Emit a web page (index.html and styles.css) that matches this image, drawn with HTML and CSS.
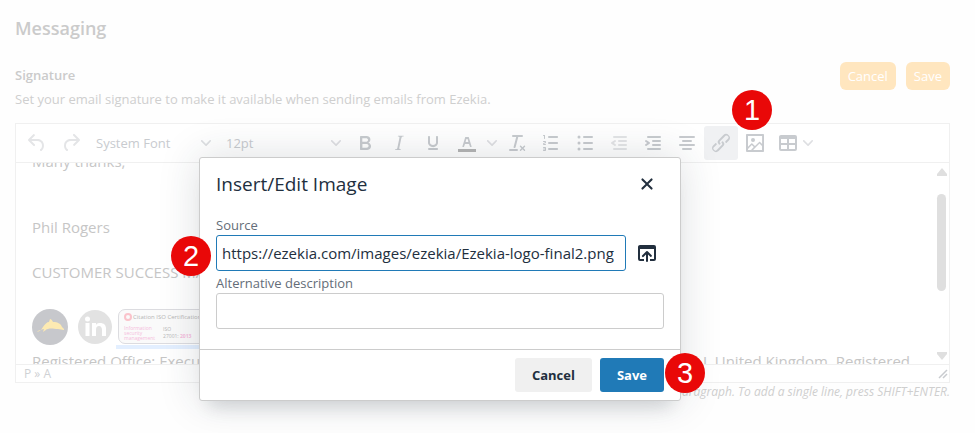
FILE: index.html
```html
<!DOCTYPE html>
<html lang="en">
<head>
    <meta charset="UTF-8">
    <meta name="viewport" content="width=device-width, initial-scale=1.0">
    <title>Messaging</title>
    <link rel="stylesheet" href="styles.css">
</head>
<body>
    <main class="page">
        <h1>Messaging</h1>
        <div class="section-head">
            <div>
                <h2>Signature</h2>
                <p>Set your email signature to make it available when sending emails from Ezekia.</p>
            </div>
            <div class="section-actions">
                <button type="button">Cancel</button>
                <button type="button">Save</button>
            </div>
        </div>

        <div class="editor">
            <div class="toolbar">
                <button type="button" aria-label="Undo" class="tool disabled"><svg viewBox="0 0 24 24"><path d="M6.4 8H12c3.7 0 6.2 2 6.8 5.1.6 2.7-.4 5.6-2.3 6.8a1 1 0 0 1-1-1.8c1.1-.6 1.8-2.7 1.4-4.6-.5-2.1-2.1-3.5-4.9-3.5H6.4l3.3 3.3a1 1 0 1 1-1.4 1.4l-5-5a1 1 0 0 1 0-1.4l5-5a1 1 0 0 1 1.4 1.4L6.4 8z"/></svg></button>
                <button type="button" aria-label="Redo" class="tool disabled"><svg viewBox="0 0 24 24"><path d="M17.6 10H12c-2.8 0-4.4 1.4-4.9 3.5-.4 2 .3 4 1.4 4.6a1 1 0 1 1-1 1.8c-2-1.2-2.9-4.1-2.3-6.8.6-3 3-5.1 6.8-5.1h5.6l-3.3-3.3a1 1 0 1 1 1.4-1.4l5 5a1 1 0 0 1 0 1.4l-5 5a1 1 0 0 1-1.4-1.4l3.3-3.3z"/></svg></button>
                <button type="button" class="tool-select">System Font <svg class="chevron" viewBox="0 0 10 10"><path d="M8.7 2.2c.3-.3.8-.3 1 0 .4.4.4.9 0 1.2L5.7 7.8c-.3.3-.9.3-1.2 0L.2 3.4a.8.8 0 0 1 0-1.2c.3-.3.8-.3 1.1 0L5 6l3.7-3.8z"/></svg></button>
                <button type="button" class="tool-select">12pt <svg class="chevron" viewBox="0 0 10 10"><path d="M8.7 2.2c.3-.3.8-.3 1 0 .4.4.4.9 0 1.2L5.7 7.8c-.3.3-.9.3-1.2 0L.2 3.4a.8.8 0 0 1 0-1.2c.3-.3.8-.3 1.1 0L5 6l3.7-3.8z"/></svg></button>
                <button type="button" aria-label="Bold" class="tool"><svg viewBox="0 0 24 24"><path fill-rule="evenodd" d="M7.8 19c-.3 0-.5 0-.6-.2l-.2-.5V5.7c0-.2 0-.4.2-.5l.6-.2h5c1.5 0 2.7.3 3.5 1 .7.6 1.1 1.4 1.1 2.5a3 3 0 0 1-.6 1.9c-.4.6-1 1-1.6 1.2.4.1.9.3 1.3.6s.8.7 1 1.2c.4.4.5 1 .5 1.6 0 1.3-.4 2.3-1.3 3-.8.7-2.1 1-3.8 1H7.8zm5-8.3c.6 0 1.2-.1 1.6-.5.4-.3.6-.7.6-1.3 0-1.1-.8-1.7-2.3-1.7H9.3v3.5h3.4zm.5 6c.7 0 1.3-.1 1.7-.4.4-.4.6-.9.6-1.5s-.2-1-.7-1.4c-.4-.3-1-.4-2-.4H9.4v3.8h4z"/></svg></button>
                <button type="button" aria-label="Italic" class="tool"><svg viewBox="0 0 24 24"><path d="M16.7 4.7l-.1.9h-.3c-.6 0-1 0-1.4.3-.3.3-.4.6-.5 1.1l-2.1 9.8v.6c0 .5.4.8 1.4.8h.2l-.2.8H8l.2-.8h.2c1.1 0 1.8-.5 2-1.5l2-9.8.1-.5c0-.6-.4-.8-1.4-.8h-.3l.2-.9h5.8z"/></svg></button>
                <button type="button" aria-label="Underline" class="tool"><svg viewBox="0 0 24 24"><path d="M16 5c.6 0 1 .4 1 1v5.5a4 4 0 0 1-.4 1.8l-1 1.4a5.3 5.3 0 0 1-5.5 1 5 5 0 0 1-1.6-1c-.5-.4-.8-.9-1.1-1.4a4 4 0 0 1-.4-1.8V6c0-.6.4-1 1-1s1 .4 1 1v5.5c0 .3 0 .6.2 1l.6.7a3.3 3.3 0 0 0 2.2.8 3.4 3.4 0 0 0 2.2-.8c.3-.2.4-.5.6-.8l.2-.9V6c0-.6.4-1 1-1zM8 17h8c.6 0 1 .4 1 1s-.4 1-1 1H8a1 1 0 0 1 0-2z"/></svg></button>
                <button type="button" aria-label="Text color" class="tool split"><svg viewBox="0 0 24 24"><path fill="#b5b5b5" d="M3 18h18v3H3z"/><path fill-rule="evenodd" d="M8.7 16h-.8a.5.5 0 0 1-.5-.6l2.7-9c.1-.3.3-.4.5-.4h2.8c.2 0 .4.1.5.4l2.7 9a.5.5 0 0 1-.5.6h-.8a.5.5 0 0 1-.4-.4l-.7-2.2c0-.3-.3-.4-.5-.4h-3.4c-.2 0-.4.1-.5.4l-.7 2.2c0 .3-.2.4-.4.4zm2.6-7.6l-.6 2a.5.5 0 0 0 .5.6h1.6a.5.5 0 0 0 .5-.6l-.6-2c0-.3-.3-.4-.5-.4h-.4c-.2 0-.4.1-.5.4z"/></svg><svg class="chevron" viewBox="0 0 10 10"><path d="M8.7 2.2c.3-.3.8-.3 1 0 .4.4.4.9 0 1.2L5.7 7.8c-.3.3-.9.3-1.2 0L.2 3.4a.8.8 0 0 1 0-1.2c.3-.3.8-.3 1.1 0L5 6l3.7-3.8z"/></svg></button>
                <button type="button" aria-label="Clear formatting" class="tool"><svg viewBox="0 0 24 24"><path d="M13.2 6a1 1 0 0 1 0 .2l-2.6 10a1 1 0 0 1-1 .8h-.2a.8.8 0 0 1-.8-1l2.6-10H8a1 1 0 1 1 0-2h9a1 1 0 0 1 0 2h-3.8zM5 18h7a1 1 0 0 1 0 2H5a1 1 0 0 1 0-2zm14 1.8L17.5 18.3 16 19.8a.7.7 0 0 1-1-1l1.5-1.5-1.5-1.5a.7.7 0 0 1 1-1l1.5 1.5 1.5-1.5a.7.7 0 0 1 1 1L18.5 17.3l1.5 1.5a.7.7 0 0 1-1 1z"/></svg></button>
                <button type="button" aria-label="Numbered list" class="tool"><svg viewBox="0 0 24 24"><path d="M10 17h8c.6 0 1 .4 1 1s-.4 1-1 1h-8a1 1 0 0 1 0-2zm0-6h8c.6 0 1 .4 1 1s-.4 1-1 1h-8a1 1 0 0 1 0-2zm0-6h8c.6 0 1 .4 1 1s-.4 1-1 1h-8a1 1 0 1 1 0-2zM6 4v3.5c0 .3-.2.5-.5.5a.5.5 0 0 1-.5-.5V5h-.5a.5.5 0 0 1 0-1H6zm-1 8.8l.2.2h1.3c.3 0 .5.2.5.5s-.2.5-.5.5H4.9a1 1 0 0 1-.9-1V13c0-.4.3-.8.6-1l1.2-.4.2-.3a.2.2 0 0 0-.2-.2H4.5a.5.5 0 0 1-.5-.5c0-.3.2-.5.5-.5h1.6c.5 0 .9.4.9 1v.1c0 .4-.3.8-.6 1l-1.2.4-.2.3zM7 17v2c0 .6-.4 1-1 1H4.5a.5.5 0 0 1 0-1h1.2c.2 0 .3-.1.3-.3 0-.2-.1-.3-.3-.3H4.4a.4.4 0 1 1 0-.8h1.3c.2 0 .3-.1.3-.3 0-.2-.1-.3-.3-.3H4.5a.5.5 0 1 1 0-1H6c.6 0 1 .4 1 1z"/></svg></button>
                <button type="button" aria-label="Bullet list" class="tool"><svg viewBox="0 0 24 24"><path d="M11 5h8a1 1 0 0 1 0 2h-8a1 1 0 0 1 0-2zm0 6h8a1 1 0 0 1 0 2h-8a1 1 0 0 1 0-2zm0 6h8a1 1 0 0 1 0 2h-8a1 1 0 0 1 0-2z"/><circle cx="6" cy="6" r="1.5"/><circle cx="6" cy="12" r="1.5"/><circle cx="6" cy="18" r="1.5"/></svg></button>
                <button type="button" aria-label="Decrease indent" class="tool disabled"><svg viewBox="0 0 24 24"><path d="M7 5h12a1 1 0 0 1 0 2H7a1 1 0 0 1 0-2zm5 4h7a1 1 0 0 1 0 2h-7a1 1 0 0 1 0-2zm0 4h7a1 1 0 0 1 0 2h-7a1 1 0 0 1 0-2zm-5 4h12a1 1 0 0 1 0 2H7a1 1 0 0 1 0-2zm1.6-3.8a1 1 0 0 1-1.2 1.6l-3-2a1 1 0 0 1 0-1.6l3-2a1 1 0 0 1 1.2 1.6L6.8 12l1.8 1.2z"/></svg></button>
                <button type="button" aria-label="Increase indent" class="tool"><svg viewBox="0 0 24 24"><path d="M7 5h12a1 1 0 0 1 0 2H7a1 1 0 0 1 0-2zm5 4h7a1 1 0 0 1 0 2h-7a1 1 0 0 1 0-2zm0 4h7a1 1 0 0 1 0 2h-7a1 1 0 0 1 0-2zm-5 4h12a1 1 0 0 1 0 2H7a1 1 0 0 1 0-2zm-2.6-3.8L6.2 12l-1.8-1.2a1 1 0 0 1 1.2-1.6l3 2a1 1 0 0 1 0 1.6l-3 2a1 1 0 0 1-1.2-1.6z"/></svg></button>
                <button type="button" aria-label="Align center" class="tool"><svg viewBox="0 0 24 24"><path d="M5 5h14a1 1 0 0 1 0 2H5a1 1 0 0 1 0-2zm3 4h8a1 1 0 0 1 0 2H8a1 1 0 0 1 0-2zm-3 4h14a1 1 0 0 1 0 2H5a1 1 0 0 1 0-2zm3 4h8a1 1 0 0 1 0 2H8a1 1 0 0 1 0-2z"/></svg></button>
                <button type="button" aria-label="Link" class="tool active"><svg viewBox="0 0 24 24"><path d="M6.2 12.3a1 1 0 0 1 1.4 1.4l-2.1 2a2 2 0 1 0 2.7 2.8l4.8-4.8a1 1 0 0 0 0-1.4 1 1 0 1 1 1.4-1.3 2.9 2.9 0 0 1 0 4L9.6 20a3.9 3.9 0 0 1-5.5-5.5l2-2zm11.6-.6a1 1 0 0 1-1.4-1.4l2-2a2 2 0 1 0-2.6-2.8L11 10.3a1 1 0 0 0 0 1.4A1 1 0 1 1 9.6 13a2.9 2.9 0 0 1 0-4L14.4 4a3.9 3.9 0 0 1 5.5 5.5l-2 2z"/></svg></button>
                <button type="button" aria-label="Image" class="tool"><svg viewBox="0 0 24 24"><path fill-rule="evenodd" d="M5 15.7l3.3-3.2c.3-.3.7-.3 1 0L12 15l4.1-4c.3-.4.8-.4 1 0l2 1.9V5H5v10.7zM5 18v1h3l2.8-2.9-2-2L5 17.9zm14-3l-2.5-2.4-6.4 6.5H19v-4zM4 3h16c.6 0 1 .4 1 1v16c0 .6-.4 1-1 1H4a1 1 0 0 1-1-1V4c0-.6.4-1 1-1z"/><circle cx="10" cy="9" r="2"/></svg></button>
                <button type="button" aria-label="Table" class="tool split menu"><svg viewBox="0 0 24 24"><path fill-rule="evenodd" d="M19 4a2 2 0 0 1 2 2v12a2 2 0 0 1-2 2H5a2 2 0 0 1-2-2V6c0-1.1.9-2 2-2h14zM5 14v4h6v-4H5zm14 0h-6v4h6v-4zm0-6h-6v4h6V8zM5 12h6V8H5v4z"/></svg><svg class="chevron" viewBox="0 0 10 10"><path d="M8.7 2.2c.3-.3.8-.3 1 0 .4.4.4.9 0 1.2L5.7 7.8c-.3.3-.9.3-1.2 0L.2 3.4a.8.8 0 0 1 0-1.2c.3-.3.8-.3 1.1 0L5 6l3.7-3.8z"/></svg></button>
            </div>

            <div class="edit-area">
                <div class="content">
                    <p>Many thanks,</p>
                    <p class="spaced">Phil Rogers</p>
                    <p>CUSTOMER SUCCESS MANAGER</p>
                    <div class="logos">
                        <svg width="36" height="36" viewBox="0 0 36 36" aria-label="Ezekia">
                            <circle cx="18" cy="18" r="18" fill="#c7c8cc"/>
                            <path fill="#fdeab2" d="M5 23c3-1 4-2 6-5 2-3 4-5 6-5l1-3c1 0 2 1 3 3 5 0 8 2 9 5l2 2v1c-2 0-4-1-6-1-4 0-7-1-10 0-2 0-3 2-5 3l1-3c-2 0-4 1-6 2z"/>
                        </svg>
                        <svg width="36" height="36" viewBox="0 0 36 36" aria-label="LinkedIn">
                            <circle cx="18" cy="18" r="17" fill="#e2e2e2"/>
                            <circle cx="10.5" cy="10" r="2.5" fill="#fff"/>
                            <path fill="#fff" d="M8.500 14h4v13h-4zM15 14h4v2c1-2 3-2 4-2 4 0 6 2 6 6v7h-4v-6c0-2-1-4-3-4s-3 1-3 4v6h-4z"/>
                        </svg>
                        <div class="iso-wrap">
                            <div class="iso">
                                <div class="iso-title"><i></i>Citation ISO Certification</div>
                                <div class="iso-body">
                                    <span class="pink">Information<br>security<br>management</span>
                                    <span>ISO<br>27001: <b class="pink">2013</b></span>
                                </div>
                            </div>
                        </div>
                    </div>
                    <p class="office"><span>Registered Office: Executive</span><span>J, United Kingdom. Registered</span></p>
                </div>
                <div class="scrollbar">
                    <svg width="10" height="8" viewBox="0 0 10 8"><path d="M5 0l5 6v2H0V6z"/></svg>
                    <div class="thumb"></div>
                    <svg width="10" height="8" viewBox="0 0 10 8"><path d="M5 8L0 2V0h10v2z"/></svg>
                </div>
            </div>

            <div class="statusbar">
                <span>P » A</span>
                <svg width="10" height="10" viewBox="0 0 10 10"><path d="M1 9l8-8M5 9l4-4" stroke="#c8cbcf" stroke-width="1.5"/></svg>
            </div>
        </div>
        <p class="hint">Press ENTER to start a new paragraph. To add a single line, press SHIFT+ENTER.</p>
    </main>

    <form class="dialog" role="dialog" aria-labelledby="dialogTitle">
        <div class="dialog-header">
            <h3 id="dialogTitle">Insert/Edit Image</h3>
            <button type="button" aria-label="Close" class="icon-btn"><svg viewBox="0 0 24 24"><path d="M17.3 8.2L13.4 12l3.9 3.8a1 1 0 0 1-1.5 1.5L12 13.4l-3.8 3.9a1 1 0 0 1-1.5-1.5l3.9-3.8-3.9-3.8a1 1 0 0 1 1.5-1.5l3.8 3.9 3.8-3.9a1 1 0 0 1 1.5 1.5z"/></svg></button>
        </div>
        <div class="dialog-body">
            <label for="source">Source</label>
            <div class="source-row">
                <input type="text" id="source" class="focused" value="https://ezekia.com/images/ezekia/Ezekia-logo-final2.png">
                <button type="button" aria-label="Browse files" class="icon-btn"><svg viewBox="0 0 24 24"><path d="M19 4a2 2 0 0 1 2 2v12a2 2 0 0 1-2 2h-4v-2h4V8H5v10h4v2H5a2 2 0 0 1-2-2V6c0-1.1.9-2 2-2h14zm-8 9.4l-2.3 2.3a1 1 0 1 1-1.4-1.4l4-4a1 1 0 0 1 1.4 0l4 4a1 1 0 0 1-1.4 1.4L13 13.4V20a1 1 0 0 1-2 0v-6.6z"/></svg></button>
            </div>
            <label for="alt">Alternative description</label>
            <input type="text" id="alt">
        </div>
        <div class="dialog-footer">
            <button type="button" class="btn">Cancel</button>
            <button type="submit" class="btn primary">Save</button>
        </div>
    </form>

    <div class="step step-1">1</div>
    <div class="step step-2">2</div>
    <div class="step step-3">3</div>
</body>
</html>
```
FILE: styles.css
```css
* {
    box-sizing: border-box;
}

body {
    margin: 0;
    min-height: 100vh;
    background: #fefefe;
    font-family: "Open Sans", "Noto Sans", sans-serif;
    font-size: 13px;
    color: #cfcfcf;
    position: relative;
}

h1, h2, h3, p {
    margin: 0;
}

button, input {
    font-family: inherit;
}

button {
    border: none;
    padding: 0;
    cursor: pointer;
}

svg {
    fill: currentColor;
    flex-shrink: 0;
}

.page {
    padding: 14px 25px 0 15px;
}

h1 {
    font-size: 18px;
    line-height: 28px;
    font-weight: 600;
    color: #cbcbcb;
}

.section-head {
    display: flex;
    justify-content: space-between;
    margin-top: 20px;
    line-height: 23px;
}

h2 {
    font-size: 13px;
    line-height: 26px;
    font-weight: 600;
    color: #cbcbcb;
}

.section-actions {
    display: flex;
    align-items: flex-start;
    gap: 10px;
}

.section-actions button {
    height: 28px;
    padding: 0 8px;
    border-radius: 6px;
    background: #ffe6bf;
    color: #fff;
    font-size: 13px;
}

/* Editor */
.editor {
    margin-top: 12px;
    border: 1px solid #f0f0f0;
    background: #fff;
}

.toolbar {
    display: flex;
    align-items: center;
    height: 39px;
    padding: 0 4px;
    border-bottom: 1px solid #f0f0f0;
    color: #c8cbcf;
}

.tool {
    display: flex;
    align-items: center;
    justify-content: center;
    width: 34px;
    height: 34px;
    border-radius: 3px;
    background: none;
    color: inherit;
}

.tool svg {
    width: 24px;
    height: 24px;
}

.tool.split {
    justify-content: flex-start;
    width: 50px;
    padding-left: 5px;
    gap: 8px;
}

.tool.menu {
    padding-left: 4px;
    gap: 3px;
}

.tool.disabled {
    color: #e4e5e7;
}

.tool.active {
    background: #f0f1f3;
}

.tool .chevron,
.chevron {
    width: 10px;
    height: 10px;
    color: #dedfe2;
}

.tool-select {
    display: flex;
    align-items: center;
    justify-content: space-between;
    width: 130px;
    height: 34px;
    padding: 0 7px 0 8px;
    background: none;
    color: #c8cbcf;
    font-size: 13px;
}

.edit-area {
    display: flex;
    height: 201px;
    overflow: hidden;
}

.content {
    flex: 1;
    min-width: 0;
    margin-top: -13px;
    padding: 0 24px 0 16px;
    font-size: 15px;
    line-height: 22px;
    color: #c6c6c6;
}

.content p {
    margin-bottom: 23px;
    white-space: nowrap;
}

.content .spaced {
    margin-top: 44px;
}

.logos {
    display: flex;
    align-items: center;
    gap: 9px;
    height: 42px;
}

.content .office {
    display: flex;
    justify-content: space-between;
    margin-top: 2px;
}

.iso-wrap {
    margin: 3px 0 0 -6px;
    border-bottom: 4px solid #e3efff;
}

.iso {
    width: 120px;
    height: 35px;
    margin: 0 0 1px 2px;
    padding: 3px 5px;
    border: 1px solid #dcdce0;
    border-radius: 7px;
    background: #fafafa;
    line-height: 9px;
    white-space: nowrap;
    color: #b5b5b5;
}

.iso-title {
    display: flex;
    align-items: center;
    gap: 1px;
    font-size: 6px;
}

.iso-title i {
    width: 8px;
    height: 8px;
    border: 2px solid #fac3cb;
    border-radius: 50%;
}

.iso-body {
    display: flex;
    gap: 8px;
    margin-top: 4px;
    font-size: 5px;
    line-height: 5px;
}

.iso-body span + span {
    line-height: 7px;
}

.pink {
    color: #f5bcdc;
}

.scrollbar {
    display: flex;
    flex-direction: column;
    align-items: center;
    justify-content: space-between;
    width: 15px;
    padding: 5px 0 4px;
    color: #dfdfdf;
}

.thumb {
    width: 9px;
    height: 97px;
    margin-bottom: 43px;
    border-radius: 5px;
    background: #dfdfdf;
}

.statusbar {
    display: flex;
    justify-content: space-between;
    align-items: center;
    height: 18px;
    padding: 0 1px 0 8px;
    border-top: 1px solid #f0f0f0;
    font-size: 12px;
    color: #cfd1d4;
}

.hint {
    line-height: 18px;
    font-size: 12px;
    font-style: italic;
    text-align: right;
}

/* Dialog */
.dialog {
    position: absolute;
    top: 157px;
    left: 199px;
    width: 482px;
    border: 1px solid #ccc;
    border-radius: 3px;
    background: #fff;
    box-shadow: 0 16px 16px -10px rgba(34, 47, 62, 0.15), 0 0 40px 1px rgba(34, 47, 62, 0.15);
    color: #222f3e;
}

.dialog-header {
    display: flex;
    align-items: center;
    justify-content: space-between;
    padding: 8px 16px 0;
}

.dialog-header h3 {
    font-size: 19px;
    line-height: 36px;
    font-weight: normal;
}

.icon-btn {
    display: flex;
    align-items: center;
    justify-content: center;
    flex-shrink: 0;
    width: 34px;
    height: 34px;
    background: none;
    color: #222f3e;
}

.icon-btn svg {
    width: 24px;
    height: 24px;
}

.dialog-body {
    padding: 14px 16px 20px;
}

.dialog-body label {
    display: block;
    font-size: 13px;
    line-height: 19px;
    color: #646d78;
}

.dialog-body input {
    display: block;
    width: 100%;
    height: 36px;
    padding: 0 5px;
    border: 1px solid #ccc;
    border-radius: 3px;
    background: #fff;
    color: #222f3e;
    font-size: 15px;
    outline: none;
}

.dialog-body input.focused {
    border-color: #207ab7;
}

.source-row {
    display: flex;
    align-items: center;
    gap: 4px;
    margin-bottom: 3px;
}

.dialog-footer {
    display: flex;
    justify-content: flex-end;
    gap: 8px;
    padding: 8px 16px;
    border-top: 1px solid #ccc;
}

.btn {
    height: 34px;
    padding: 0 17px;
    border-radius: 3px;
    background: #f0f0f0;
    color: #222f3e;
    font-size: 13px;
    font-weight: bold;
}

.btn.primary {
    background: #207ab7;
    color: #fff;
}

/* Numbered markers */
.step {
    position: absolute;
    display: flex;
    align-items: center;
    justify-content: center;
    width: 40px;
    height: 40px;
    border-radius: 50%;
    background: #e90808;
    color: #fff;
    font-family: "Liberation Sans", Arial, sans-serif;
    font-size: 29px;
}

.step-1 {
    top: 90px;
    left: 732px;
}

.step-2 {
    top: 236px;
    left: 171px;
}

.step-3 {
    top: 353px;
    left: 665px;
}
```
